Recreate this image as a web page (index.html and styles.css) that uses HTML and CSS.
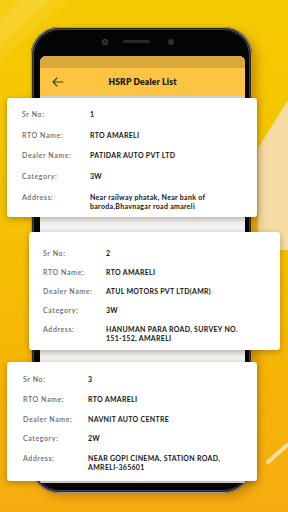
FILE: index.html
```html
<!DOCTYPE html>
<html lang="en">
<head>
<meta charset="utf-8">
<title>HSRP Dealer List</title>
<link rel="stylesheet" href="styles.css">
</head>
<body>
<svg class="decor" width="288" height="512" viewBox="0 0 288 512" aria-hidden="true">
  <polygon points="0,0 70,0 0,60" fill="#f8d22a" opacity="0.45"/>
  <polygon points="20,0 50,0 0,45 0,20" fill="#fbe06a" opacity="0.25"/>
  <polygon points="258,148 288,100 288,250 258,250" fill="#f4dca4"/>
  <line x1="268" y1="462" x2="287" y2="445" stroke="#f7dfa0" stroke-width="4" stroke-linecap="round"/>
</svg>
<div class="stage">
  <div class="phone">
    <div class="phone-top">
      <span class="cam"></span>
      <span class="speaker"></span>
      <span class="sensor"></span>
    </div>
    <div class="screen">
      <div class="status"></div>
      <div class="appbar">
        <svg class="back" width="12" height="10" viewBox="0 0 12 10"><path d="M11 5H1.5M5 1L1 5l4 4" fill="none" stroke="#4a3b1a" stroke-width="1.1" stroke-linecap="round" stroke-linejoin="round"/></svg>
        <span class="title">HSRP Dealer List</span>
      </div>
      <div class="list"></div>
    </div>
  </div>
  <div class="cards">
    <div class="card card-a">
      <div class="row"><span class="lbl">Sr No:</span><span class="val">1</span></div>
      <div class="row"><span class="lbl">RTO Name:</span><span class="val">RTO AMARELI</span></div>
      <div class="row"><span class="lbl">Dealer Name:</span><span class="val">PATIDAR AUTO PVT LTD</span></div>
      <div class="row"><span class="lbl">Category:</span><span class="val">3W</span></div>
      <div class="row"><span class="lbl">Address:</span><span class="val">Near railway phatak, Near bank of baroda,Bhavnagar road amareli</span></div>
    </div>
    <div class="card card-b">
      <div class="row"><span class="lbl">Sr No:</span><span class="val">2</span></div>
      <div class="row"><span class="lbl">RTO Name:</span><span class="val">RTO AMARELI</span></div>
      <div class="row"><span class="lbl">Dealer Name:</span><span class="val">ATUL MOTORS PVT LTD(AMR)</span></div>
      <div class="row"><span class="lbl">Category:</span><span class="val">3W</span></div>
      <div class="row"><span class="lbl">Address:</span><span class="val">HANUMAN PARA ROAD, SURVEY NO. 151-152, AMARELI</span></div>
    </div>
    <div class="card card-c">
      <div class="row"><span class="lbl">Sr No:</span><span class="val">3</span></div>
      <div class="row"><span class="lbl">RTO Name:</span><span class="val">RTO AMARELI</span></div>
      <div class="row"><span class="lbl">Dealer Name:</span><span class="val">NAVNIT AUTO CENTRE</span></div>
      <div class="row"><span class="lbl">Category:</span><span class="val">2W</span></div>
      <div class="row"><span class="lbl">Address:</span><span class="val">NEAR GOPI CINEMA, STATION ROAD, AMRELI-365601</span></div>
    </div>
  </div>
</div>
</body>
</html>
```
FILE: styles.css
```css
* { box-sizing: border-box; }
html, body { margin: 0; padding: 0; }
body {
  width: 288px;
  height: 512px;
  overflow: hidden;
  position: relative;
  font-family: "Lato", "Noto Sans", sans-serif;
  background: linear-gradient(180deg, #f5ca02 0%, #f5c103 45%, #f5b407 75%, #f6ac10 100%);
}
.decor { position: absolute; left: 0; top: 0; }
.stage {
  position: relative;
  display: grid;
  grid-template-areas: "all";
}
.phone, .cards { grid-area: all; }

.phone {
  margin: 27px 0 0 31px;
  width: 221px;
  height: 466px;
  background: #040404;
  border-radius: 28px;
  box-shadow: inset 0 0 0 1px #9a9a9a, inset 0 0 0 2.5px #2a2a2a, inset 0 0 0 3px #5a5a5a, 5px 4px 10px rgba(150, 85, 0, 0.45);
  padding: 0 7px 10px 9px;
  display: flex;
  flex-direction: column;
}
.phone-top {
  height: 29px;
  display: flex;
  align-items: center;
  padding-left: 62px;
}
.cam {
  width: 6px; height: 6px; border-radius: 50%;
  background: #1c1c1c; box-shadow: inset 0 0 0 1px #3c3c3c;
}
.speaker {
  width: 27px; height: 3px; border-radius: 2px;
  background: #2a2a2a; margin-left: 15px;
}
.sensor {
  width: 6px; height: 6px; border-radius: 50%;
  background: #2e2e2e; margin-left: 18px;
}
.screen {
  flex: 1;
  border-radius: 6px 6px 2px 2px;
  overflow: hidden;
  display: flex;
  flex-direction: column;
  background: #e4e4e4;
}
.status { height: 12px; background: #d9a83b; }
.appbar {
  height: 28px;
  background: #fcc443;
  display: flex;
  align-items: center;
  position: relative;
  padding-left: 12px;
}
.back { display: block; }
.title {
  position: absolute;
  left: 0; right: 0;
  text-align: center;
  font-weight: 800;
  font-size: 8.5px;
  color: #1d1a12;
  letter-spacing: 0.2px;
}
.list {
  flex: 1;
  background: linear-gradient(180deg, #d8d8d8, #f2f2f2 10px, #f2f2f2);
}

.cards {
  padding-top: 98px;
  display: flex;
  flex-direction: column;
  align-items: flex-start;
}
.card {
  background: #fff;
  border-radius: 3px;
  box-shadow: 0 2px 6px rgba(60, 40, 0, 0.35);
  display: flex;
  flex-direction: column;
}
.card-a { margin-left: 7px; width: 250px; height: 119px; padding: 12px 15px 0 15px; gap: 11.7px; --val: 68px; }
.card-b { margin-left: 29px; width: 251px; height: 118px; padding: 17px 14px 0 14px; margin-top: 15px; gap: 9.9px; --val: 63px; }
.card-c { margin-left: 7px; width: 250px; height: 119px; padding: 13px 15px 0 16px; margin-top: 12px; gap: 10.8px; --val: 65px; }
.row {
  display: flex;
  font-size: 7px;
  line-height: 9px;
}
.lbl {
  width: var(--val);
  flex: none;
  color: #6a6a6a;
  font-weight: 600;
  letter-spacing: 0.6px;
}
.val {
  color: #161616;
  font-weight: 700;
  letter-spacing: 0.3px;
  max-width: 142px;
}
```
